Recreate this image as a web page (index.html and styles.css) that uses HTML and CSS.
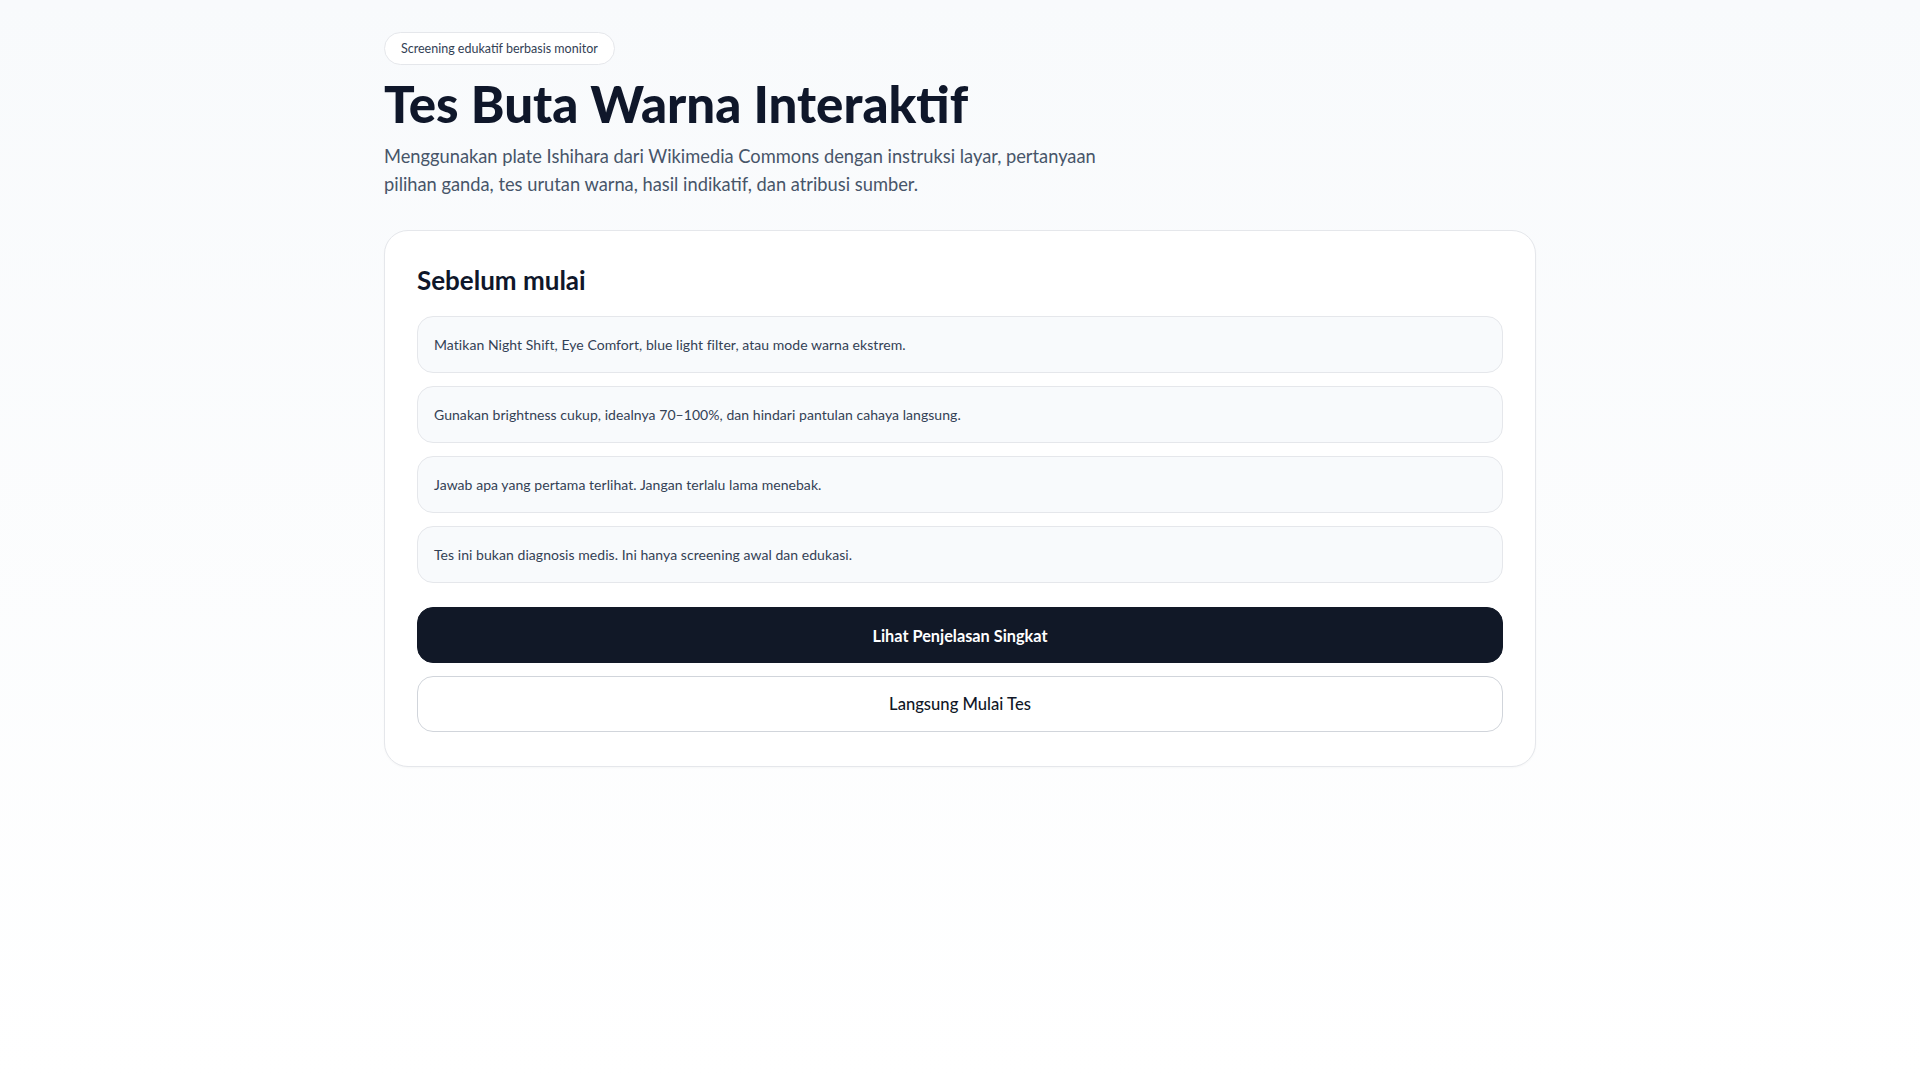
FILE: index.html
```html
<!DOCTYPE html>
<html lang="id">
<head>
<meta charset="utf-8">
<title>Tes Buta Warna Interaktif</title>
<link rel="stylesheet" href="styles.css">
</head>
<body>
<main class="wrap">
  <header class="hero">
    <span class="badge">Screening edukatif berbasis monitor</span>
    <h1 class="title">Tes Buta Warna Interaktif</h1>
    <p class="lead">Menggunakan plate Ishihara dari Wikimedia Commons dengan instruksi layar, pertanyaan pilihan ganda, tes urutan warna, hasil indikatif, dan atribusi sumber.</p>
  </header>
  <section class="card">
    <h2 class="card-title">Sebelum mulai</h2>
    <ul class="tips">
      <li class="tip">Matikan Night Shift, Eye Comfort, blue light filter, atau mode warna ekstrem.</li>
      <li class="tip">Gunakan brightness cukup, idealnya 70–100%, dan hindari pantulan cahaya langsung.</li>
      <li class="tip">Jawab apa yang pertama terlihat. Jangan terlalu lama menebak.</li>
      <li class="tip">Tes ini bukan diagnosis medis. Ini hanya screening awal dan edukasi.</li>
    </ul>
    <div class="actions">
      <button class="btn btn-primary">Lihat Penjelasan Singkat</button>
      <button class="btn btn-outline">Langsung Mulai Tes</button>
    </div>
  </section>
</main>
</body>
</html>
```
FILE: styles.css
```css
* { box-sizing: border-box; }
html, body { margin: 0; padding: 0; }
body {
  min-height: 100vh;
  background: linear-gradient(180deg, #f8fafc 0%, #ffffff 100%);
  font-family: Lato, "Noto Sans", sans-serif;
  color: #0f172a;
}
.wrap {
  max-width: 1152px;
  margin: 0 auto;
  padding: 32px 0 40px;
}
.hero { display: flex; flex-direction: column; align-items: flex-start; }
.badge {
  display: inline-block;
  height: 33px;
  line-height: 31px;
  padding: 0 16px;
  border: 1px solid #e5e7eb;
  border-radius: 999px;
  background: #fff;
  font-size: 12.5px;
  color: #334155;
}
.title {
  margin: 11px 0 0;
  font-size: 51px;
  line-height: 56px;
  font-weight: 900;
  letter-spacing: 0;
  color: #0f172a;
}
.lead {
  margin: 10px 0 0;
  max-width: 730px;
  font-size: 18.3px;
  line-height: 28px;
  color: #475569;
}
.card {
  margin-top: 32px;
  background: #fff;
  border: 1px solid #e5e7eb;
  border-radius: 24px;
  padding: 33px 32px 34px;
  box-shadow: 0 1px 2px rgba(15, 23, 42, 0.03);
}
.card-title {
  margin: 0 0 19px;
  font-size: 26px;
  line-height: 33px;
  font-weight: 700;
  color: #0f172a;
}
.tips {
  list-style: none;
  margin: 0;
  padding: 0;
  display: flex;
  flex-direction: column;
  gap: 13px;
}
.tip {
  height: 57px;
  display: flex;
  align-items: center;
  padding: 0 16px;
  background: #f8fafc;
  border: 1px solid #e5e7eb;
  border-radius: 16px;
  font-size: 14px;
  letter-spacing: 0.05px;
  color: #334155;
}
.actions {
  margin-top: 24px;
  display: flex;
  flex-direction: column;
  gap: 13px;
}
.btn {
  height: 56px;
  border-radius: 16px;
  font-family: inherit;
  font-size: 16.3px;
  font-weight: 700;
  cursor: pointer;
}
.btn-primary {
  background: #111827;
  color: #fff;
  border: 1px solid #111827;
}
.btn-outline {
  background: #fff;
  color: #111827;
  border: 1px solid #d1d5db;
  font-size: 16.6px;
  font-weight: 500;
}
```
